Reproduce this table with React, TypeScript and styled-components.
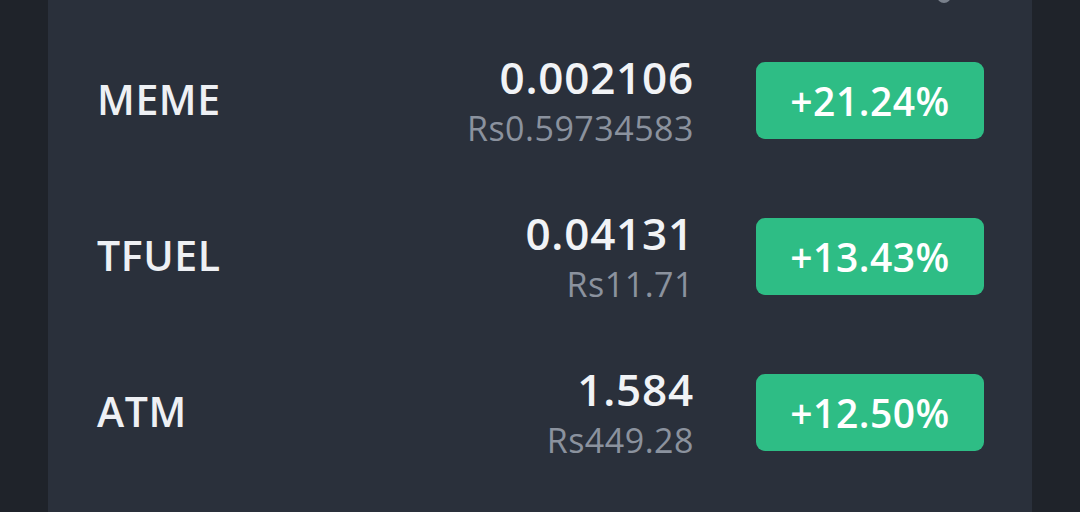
import styled, { createGlobalStyle } from "styled-components";

const GlobalStyle = createGlobalStyle`
  html, body {
    margin: 0;
    padding: 0;
    background: #1f232a;
    font-family: "Open Sans", "Noto Sans", sans-serif;
  }
`;

type Coin = {
  symbol: string;
  price: string;
  fiat: string;
  change: string;
};

const coins: Coin[] = [
  { symbol: "MEME", price: "0.002106", fiat: "Rs0.59734583", change: "+21.24%" },
  { symbol: "TFUEL", price: "0.04131", fiat: "Rs11.71", change: "+13.43%" },
  { symbol: "ATM", price: "1.584", fiat: "Rs449.28", change: "+12.50%" },
];

export default function App() {
  return (
    <>
      <GlobalStyle />
      <Page>
        <Card>
          <TopStrip>
            <CutIcon width="16" height="16" viewBox="0 0 16 16">
              <circle cx="8" cy="8" r="7" fill="#8d94a0" />
            </CutIcon>
          </TopStrip>
          {coins.map((c) => (
            <Row key={c.symbol}>
              <Symbol>{c.symbol}</Symbol>
              <PriceCol>
                <Price>{c.price}</Price>
                <Fiat>{c.fiat}</Fiat>
              </PriceCol>
              <Badge>{c.change}</Badge>
            </Row>
          ))}
        </Card>
      </Page>
    </>
  );
}

const Page = styled.div`
  width: 1080px;
  height: 512px;
  overflow: hidden;
  display: flex;
  justify-content: center;
  background: #1f232a;
`;

const Card = styled.div`
  width: 984px;
  height: 512px;
  background: #2a303b;
  display: flex;
  flex-direction: column;
  padding: 0 48px 0 49px;
  box-sizing: border-box;
`;

const TopStrip = styled.div`
  height: 22px;
  display: flex;
  justify-content: flex-end;
  padding-right: 32px;
  overflow: hidden;
`;

const CutIcon = styled.svg`
  margin-top: -12px;
  opacity: 0.8;
`;

const Row = styled.div`
  height: 156px;
  display: flex;
  align-items: center;
`;

const Symbol = styled.div`
  flex: 1;
  font-size: 41px;
  font-weight: 600;
  color: #eef0f4;
  letter-spacing: 0.6px;
  margin-top: -2px;
`;

const PriceCol = styled.div`
  display: flex;
  flex-direction: column;
  align-items: flex-end;
  margin-right: 62px;
`;

const Price = styled.div`
  font-size: 44px;
  font-weight: 600;
  color: #f1f3f6;
  line-height: 48px;
  letter-spacing: 0.8px;
  margin-bottom: 8px;
`;

const Fiat = styled.div`
  font-size: 34px;
  font-weight: 400;
  color: #8b929e;
  line-height: 38px;
  letter-spacing: 0.5px;
`;

const Badge = styled.div`
  width: 228px;
  height: 77px;
  border-radius: 9px;
  background: #2ebd85;
  color: #ffffff;
  font-size: 39px;
  font-weight: 600;
  letter-spacing: 0.5px;
  display: flex;
  align-items: center;
  justify-content: center;
`;
